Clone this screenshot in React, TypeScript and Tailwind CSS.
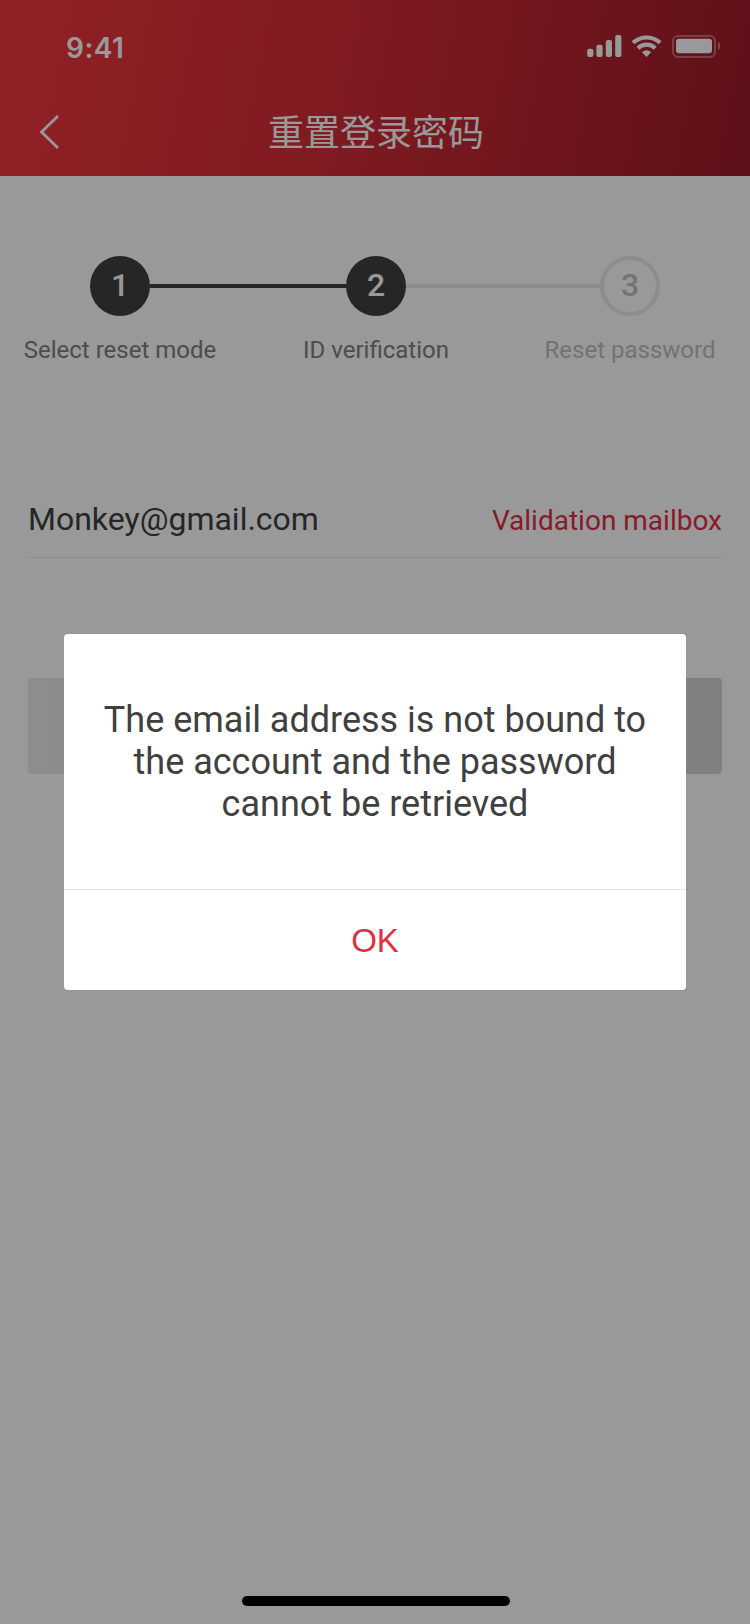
function StatusIcons() {
  return (
    <svg width="134" height="26" viewBox="586 32 134 26" fill="#ffffff">
      <rect x="587.2" y="48.7" width="6.2" height="8.3" rx="2" />
      <rect x="596.4" y="44.7" width="6.2" height="12.3" rx="2" />
      <rect x="605.8" y="40" width="6.2" height="17" rx="2" />
      <rect x="615.2" y="35" width="6.2" height="22" rx="2" />
      <path d="M646.5 57 L641.9 52.3 Q646.5 48.3 651.2 52.3 Z" />
      <g fill="none" stroke="#ffffff" strokeWidth="4.1">
        <path d="M633 42.8 A20 20 0 0 1 660.2 42.8" />
        <path d="M638 48.2 A12.2 12.2 0 0 1 655.2 48.2" />
      </g>
      <rect x="673" y="36" width="42" height="21" rx="5" fill="none" stroke="#ffffff" strokeOpacity=".35" strokeWidth="2" />
      <rect x="676" y="38.8" width="36" height="14.4" rx="3" />
      <path d="M718 42 v8 q2.8 -1.4 2.8 -4 t-2.8 -4z" opacity=".4" />
    </svg>
  );
}

type StepProps = { n: number; label: string; pending?: boolean };

function Step({ n, label, pending }: StepProps) {
  return (
    <div className="flex w-[60px] flex-col items-center">
      <div
        className={
          pending
            ? "flex h-[60px] w-[60px] items-center justify-center rounded-full border-4 border-[#ebecf0] pb-[2px] text-[32px] leading-[50px] font-medium text-[#c0c0c0]"
            : "flex h-[60px] w-[60px] items-center justify-center rounded-full bg-[#404040] pb-[2px] text-[32px] leading-[58px] font-medium text-white"
        }
      >
        {n}
      </div>
      <div
        className={
          pending
            ? "mt-5 text-2xl leading-7 whitespace-nowrap text-[#c0c0c0]"
            : "mt-5 text-2xl leading-7 whitespace-nowrap text-[#808080]"
        }
      >
        {label}
      </div>
    </div>
  );
}

export default function App() {
  return (
    <div className="relative h-[1624px] w-[750px] overflow-hidden bg-white font-['Roboto','Noto_Sans_CJK_SC',sans-serif]">
      <div className="flex h-full flex-col">
        <header className="h-[176px] bg-[linear-gradient(101deg,#f4383f_0%,#d22c37_48%,#9e1b2a_100%)] text-white">
          <div className="flex h-[88px] items-start justify-between pt-[32px] pr-[30px] pl-[66px]">
            <span className="pt-px font-['Inter',sans-serif] text-[28px] leading-[30px] font-semibold tracking-[0.5px]">9:41</span>
            <StatusIcons />
          </div>
          <div className="grid h-[88px] grid-cols-[80px_1fr_80px] items-center">
            <svg className="ml-[38px]" width="24" height="36" viewBox="0 0 24 36" fill="none" stroke="#ffffff" strokeWidth="2.8">
              <path d="M20 2 L3.5 18 L20 34" />
            </svg>
            <h1 className="pb-[4px] pl-[2px] text-center font-['Noto_Sans_CJK_SC',sans-serif] text-[36px] leading-[50px] font-normal">重置登录密码</h1>
          </div>
        </header>

        <section className="flex items-start pt-[80px] pl-[90px]">
          <Step n={1} label="Select reset mode" />
          <div className="mt-[28px] h-1 w-[196px] bg-[#404040]" />
          <Step n={2} label="ID verification" />
          <div className="mt-[28px] h-1 w-[194px] bg-[#ebecf0]" />
          <Step n={3} label="Reset password" pending />
        </section>

        <main className="mt-[112px] px-[28px]">
          <div className="flex h-[82px] items-start justify-between border-b border-[#ebebeb] pt-[24px]">
            <span className="text-[32px] leading-[38px] text-[#404040]">Monkey@gmail.com</span>
            <span className="text-[28px] leading-[42px] text-[#df2f45]">Validation mailbox</span>
          </div>
          <div className="mt-[120px] h-24 rounded bg-linear-to-r from-[#ebebeb] to-[#d5d5d9]" />
        </main>
      </div>

      <div className="absolute inset-0 flex items-center justify-center bg-black/40">
        <div className="flex h-[356px] w-[622px] flex-col overflow-hidden rounded bg-white">
          <p className="h-[255px] pt-[65px] text-center text-[36px] leading-[42px] text-[#404040]">
            The email address is not bound to
            <br />
            the account and the password
            <br />
            cannot be retrieved
          </p>
          <button className="flex-1 border-t border-[#e5e5e5] pt-[2px] font-['Liberation_Sans',sans-serif] text-[33px] text-[#df2f45]">OK</button>
        </div>
      </div>
      <div className="absolute bottom-[18px] left-[242px] h-[10px] w-[268px] rounded-full bg-black" />
    </div>
  );
}
